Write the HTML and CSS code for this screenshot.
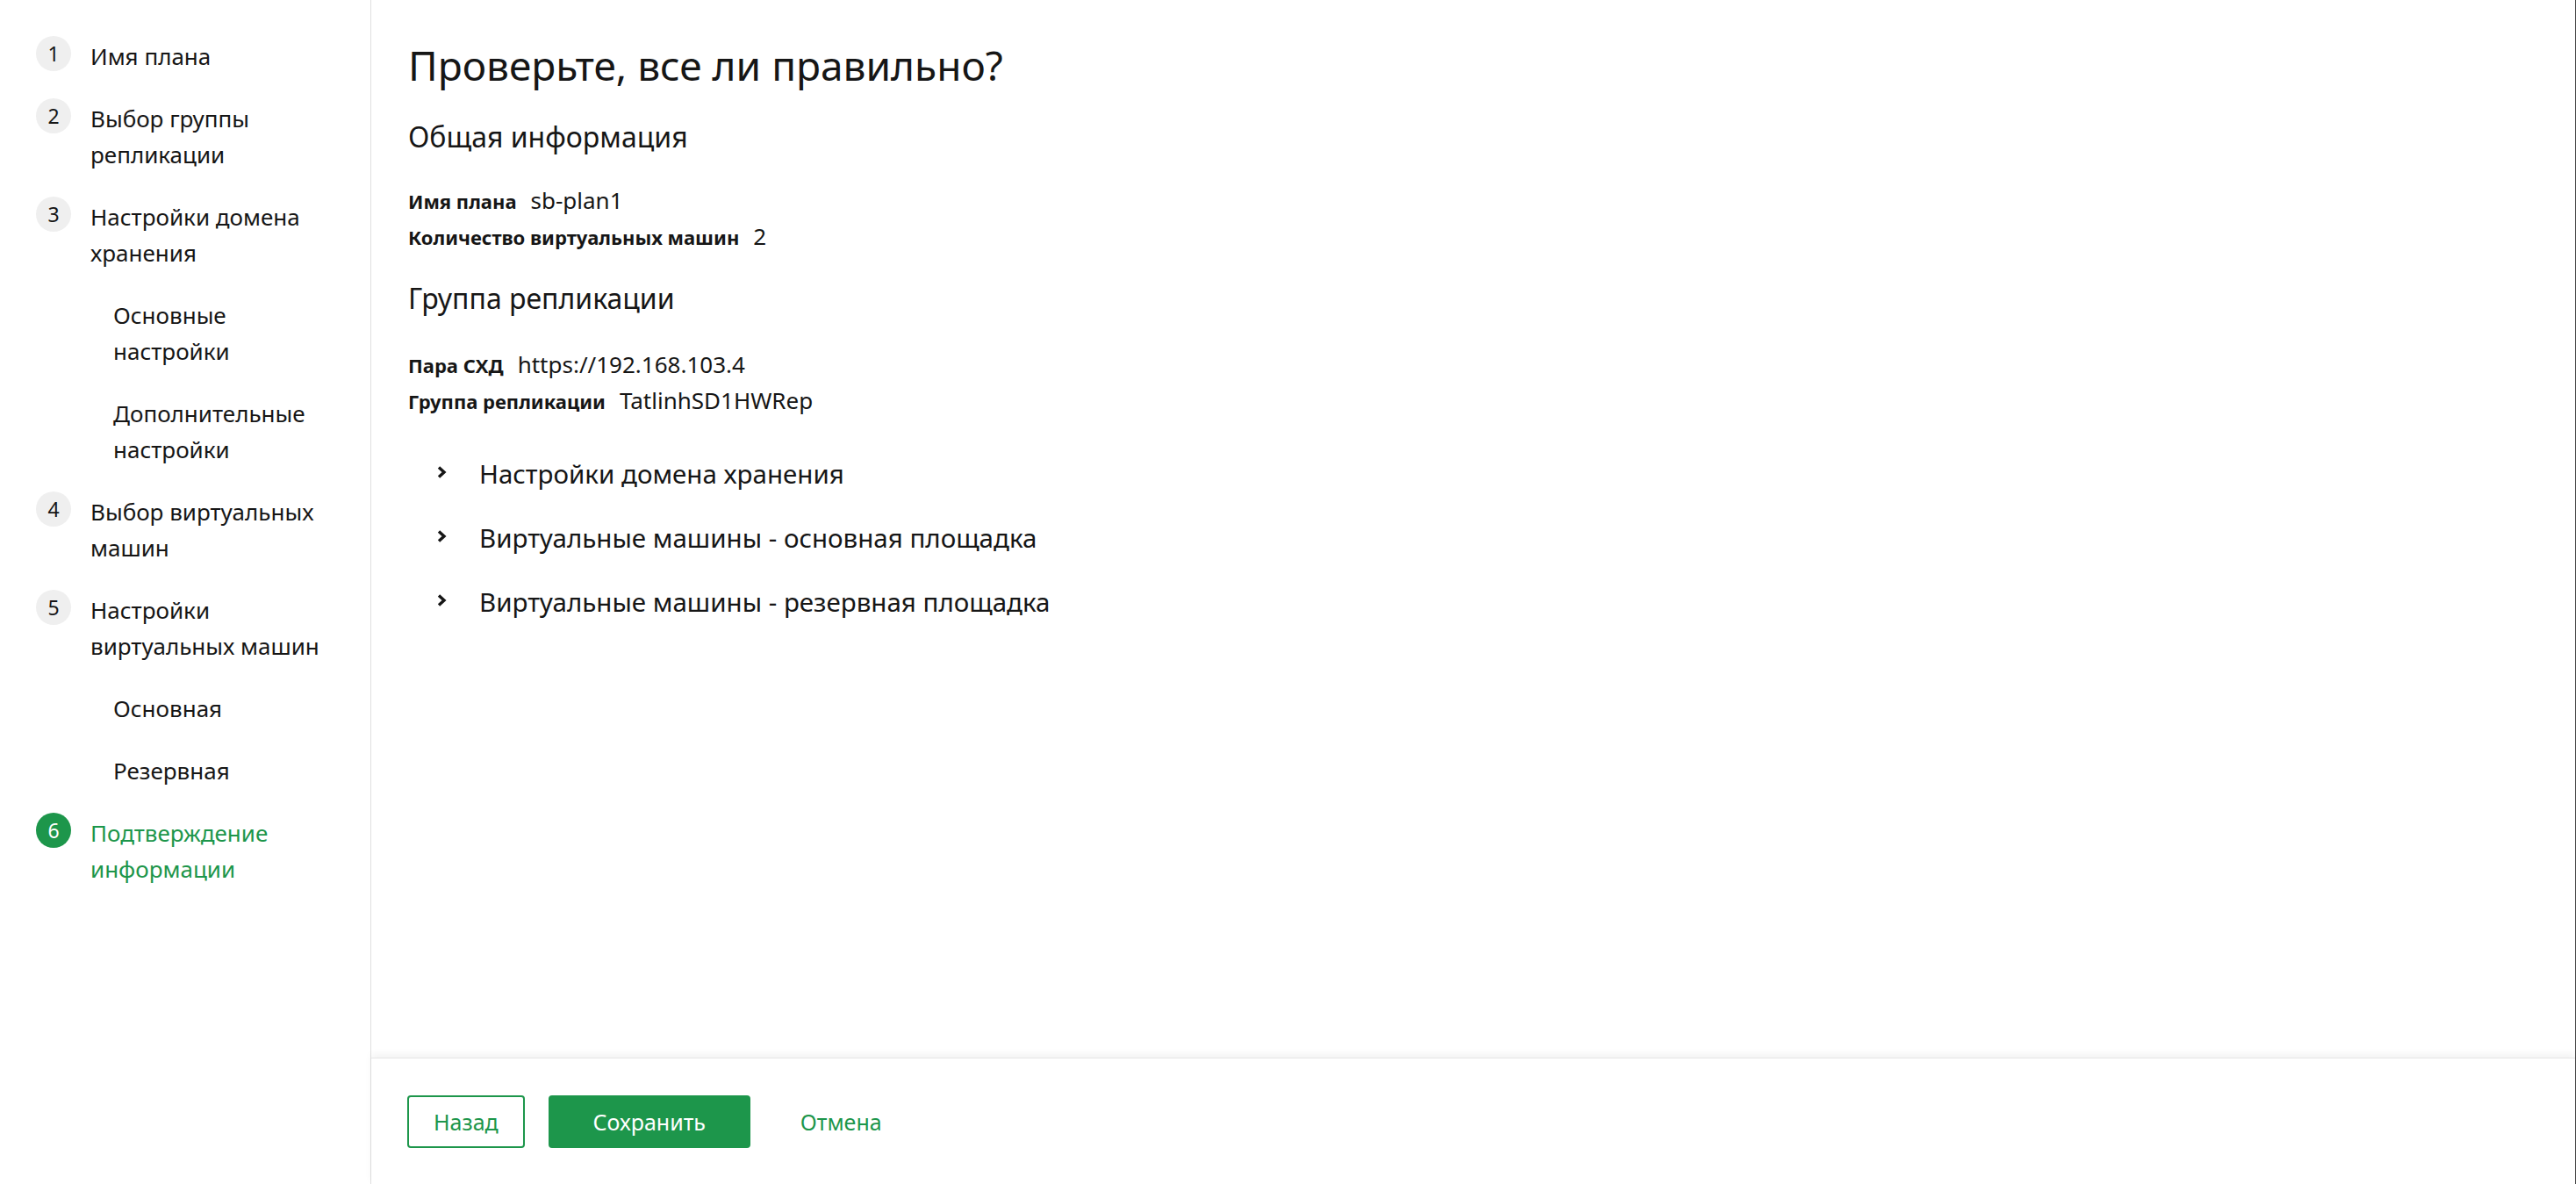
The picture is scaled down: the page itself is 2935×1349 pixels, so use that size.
FILE: index.html
```html
<!DOCTYPE html>
<html lang="ru">

<head>
    <meta charset="utf-8">
    <title>Проверьте, все ли правильно?</title>
    <link rel="stylesheet" href="styles.css">
</head>

<body>
    <div class="app">
        <nav class="sidebar">
            <div class="step">
                <span class="step-num">1</span>
                <span class="step-label">Имя плана</span>
            </div>
            <div class="step">
                <span class="step-num">2</span>
                <span class="step-label">Выбор группы репликации</span>
            </div>
            <div class="step">
                <span class="step-num">3</span>
                <span class="step-label">Настройки домена хранения</span>
            </div>
            <div class="substep">Основные настройки</div>
            <div class="substep">Дополнительные настройки</div>
            <div class="step">
                <span class="step-num">4</span>
                <span class="step-label">Выбор виртуальных машин</span>
            </div>
            <div class="step">
                <span class="step-num">5</span>
                <span class="step-label">Настройки виртуальных машин</span>
            </div>
            <div class="substep">Основная</div>
            <div class="substep">Резервная</div>
            <div class="step active">
                <span class="step-num">6</span>
                <span class="step-label">Подтверждение информации</span>
            </div>
        </nav>

        <main class="main">
            <div class="content">
                <h1 class="title">Проверьте, все ли правильно?</h1>

                <h2 class="section-title">Общая информация</h2>
                <div class="fields">
                    <div class="field">
                        <span class="field-label">Имя плана</span>
                        <span class="field-value">sb-plan1</span>
                    </div>
                    <div class="field">
                        <span class="field-label">Количество виртуальных машин</span>
                        <span class="field-value">2</span>
                    </div>
                </div>

                <h2 class="section-title section-second">Группа репликации</h2>
                <div class="fields">
                    <div class="field">
                        <span class="field-label">Пара СХД</span>
                        <span class="field-value">https://192.168.103.4</span>
                    </div>
                    <div class="field">
                        <span class="field-label">Группа репликации</span>
                        <span class="field-value">TatlinhSD1HWRep</span>
                    </div>
                </div>

                <div class="accordion">
                    <div class="accordion-item">
                        <svg class="chevron" viewBox="0 0 12 16" width="12" height="16">
                            <polyline points="3,2.5 9,8 3,13.5" fill="none" stroke="#161616" stroke-width="3.4" />
                        </svg>
                        <span>Настройки домена хранения</span>
                    </div>
                    <div class="accordion-item">
                        <svg class="chevron" viewBox="0 0 12 16" width="12" height="16">
                            <polyline points="3,2.5 9,8 3,13.5" fill="none" stroke="#161616" stroke-width="3.4" />
                        </svg>
                        <span>Виртуальные машины - основная площадка</span>
                    </div>
                    <div class="accordion-item">
                        <svg class="chevron" viewBox="0 0 12 16" width="12" height="16">
                            <polyline points="3,2.5 9,8 3,13.5" fill="none" stroke="#161616" stroke-width="3.4" />
                        </svg>
                        <span>Виртуальные машины - резервная площадка</span>
                    </div>
                </div>
            </div>

            <div class="footer">
                <button class="btn btn-outline">Назад</button>
                <button class="btn btn-primary">Сохранить</button>
                <button class="btn btn-ghost">Отмена</button>
            </div>
        </main>
    </div>
</body>

</html>
```

FILE: styles.css
```css
html,
body {
    margin: 0;
    height: 100%;
    background: #ffffff;
}

body {
    font-family: "Noto Sans", "Open Sans", sans-serif;
    color: #161616;
}

.app {
    display: flex;
    height: 100vh;
    border-right: 1px solid #444444;
    box-sizing: border-box;
}

/* steps */

.sidebar {
    width: 423px;
    flex-shrink: 0;
    box-sizing: border-box;
    border-right: 1px solid #e0e0e0;
    padding: 44px 41px 0 41px;
    display: flex;
    flex-direction: column;
    gap: 30px;
}

.step {
    display: flex;
    align-items: flex-start;
    gap: 22px;
}

.step-num {
    width: 40px;
    height: 40px;
    margin-top: -3px;
    flex-shrink: 0;
    border-radius: 50%;
    background: #efefef;
    display: flex;
    align-items: center;
    justify-content: center;
    font-size: 23px;
}

.step-label,
.substep {
    font-size: 26px;
    line-height: 41px;
}

.substep {
    padding-left: 88px;
}

.step.active .step-num {
    background: #1d964b;
    color: #ffffff;
}

.step.active .step-label {
    color: #1d964b;
}

/* review */

.main {
    flex: 1;
    display: flex;
    flex-direction: column;
    min-width: 0;
}

.content {
    flex: 1;
    padding: 44px 42px 0 42px;
}

.title {
    margin: 0;
    font-size: 46px;
    font-weight: 400;
    line-height: 60px;
}

.section-title {
    margin: 32px 0 0 0;
    font-size: 32px;
    font-weight: 400;
    line-height: 40px;
}

.section-second {
    margin-top: 30px;
}

.fields {
    margin-top: 32px;
}

.section-second + .fields {
    margin-top: 35px;
}

.field {
    display: flex;
    align-items: baseline;
    gap: 16px;
    line-height: 40px;
}

.field-label {
    font-size: 22px;
    font-weight: 700;
}

.field-value {
    font-size: 26px;
}

.accordion {
    margin-top: 26px;
}

.accordion-item {
    display: flex;
    align-items: center;
    height: 73px;
    padding-left: 32px;
    font-size: 29.5px;
}

.chevron {
    margin-right: 37px;
    margin-top: -4px;
    flex-shrink: 0;
}

/* buttons */

.footer {
    height: 144px;
    flex-shrink: 0;
    box-sizing: border-box;
    display: flex;
    align-items: center;
    gap: 27px;
    padding-left: 41px;
    border-top: 1px solid #e6e6e6;
    box-shadow: 0 -4px 8px rgba(0, 0, 0, 0.05);
}

.btn {
    height: 60px;
    padding: 0 28px;
    border-radius: 4px;
    font-family: "Noto Sans", "Open Sans", sans-serif;
    font-size: 25px;
    border: 2px solid transparent;
    background: transparent;
    color: #1d964b;
    box-sizing: border-box;
}

.btn-outline {
    border-color: #1d964b;
    background: #ffffff;
}

.btn-primary {
    min-width: 230px;
    background: #1d964b;
    border-color: #1d964b;
    color: #ffffff;
}
```
